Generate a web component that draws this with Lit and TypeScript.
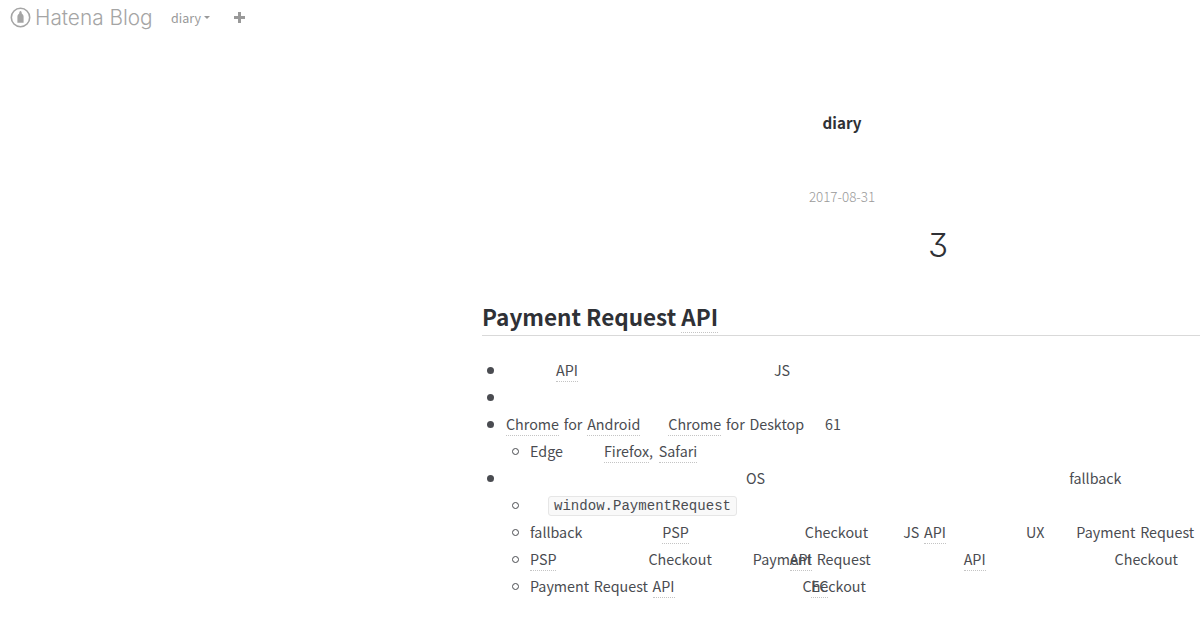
import { LitElement, html, css } from "lit";
import { customElement } from "lit/decorators.js";

type Seg = [number, string, boolean?];

const rows: { lvl: number; segs: Seg[]; code?: boolean }[] = [
  { lvl: 1, segs: [[50, "API", true], [196, "JS"]] },
  { lvl: 1, segs: [] },
  { lvl: 1, segs: [[0, "Chrome", true], [0, " for "], [0, "Android", true], [28, "Chrome", true], [0, " for Desktop"], [21, "61"]] },
  { lvl: 2, segs: [[0, "Edge"], [41, "Firefox", true], [0, ", "], [1, "Safari", true]] },
  { lvl: 1, segs: [[240, "OS"], [304, "fallback"]] },
  { lvl: 2, code: true, segs: [] },
  { lvl: 2, segs: [[0, "fallback"], [80, "PSP", true], [116, "Checkout"], [35, "JS "], [0, "API", true], [80, "UX"], [32, "Payment Request"]] },
  { lvl: 2, segs: [[0, "PSP", true], [92, "Checkout"], [41, "Payment Request"], [-81, "API", true], [152, "API", true], [129, "Checkout"]] },
  { lvl: 2, segs: [[0, "Payment Request "], [0, "API", true], [128, "Checkout"], [-55, "EC", true]] },
];

@customElement("app-root")
export class AppRoot extends LitElement {
  static styles = css`
    :host { display: block; width: 1200px; height: 630px; overflow: hidden; background: #fff; color: #4a4c51; font-family: "Noto Sans CJK JP", "Noto Sans", sans-serif; font-size: 14.3px; word-spacing: 1.5px; position: relative; }
    .nav { display: flex; align-items: center; height: 35px; padding-left: 10px; color: #999; word-spacing: 0; }
    .logo { display: flex; align-items: center; gap: 4px; font-family: "Inter", sans-serif; font-weight: 300; font-size: 20.8px; color: #a5a5a5; width: 161px; white-space: nowrap; }
    .logo svg { width: 21px; height: 21px; flex: none; }
    .blog { font-size: 12.5px; color: #999; display: flex; align-items: center; gap: 3px; width: 63px; }
    .caret { width: 0; height: 0; border: 3px solid transparent; border-top-color: #999; border-bottom: 0; }
    .plus { width: 11px; height: 11px; }
    .main { margin-left: 482px; width: 720px; }
    .title { text-align: center; font-weight: 700; font-size: 15.2px; line-height: 22px; margin-top: 76px; color: #2f3136; }
    .date { text-align: center; font-size: 13.4px; line-height: 20px; margin-top: 53px; color: #999; font-weight: 300; }
    .big { text-align: center; margin-left: 192px; font-family: "Inter", sans-serif; font-feature-settings: "cv09"; font-weight: 300; font-size: 33px; line-height: 40px; margin-top: 19px; color: #2f3136; }
    h2 { margin: 35px 0 0; font-size: 22.5px; word-spacing: 0; line-height: 32px; font-weight: 700; color: #2f3136; border-bottom: 1px solid #d9d9d9; height: 35px; white-space: nowrap; }
    .k { border-bottom: 1px dotted #c4c4c4; padding-bottom: 1px; margin-bottom: -2px; }
    h2 .k { padding-bottom: 0; margin-bottom: 0; }
    .list { margin-top: 20px; }
    .row { display: flex; align-items: center; height: 27px; white-space: pre; position: relative; }
    .l1 { padding-left: 24px; }
    .l2 { padding-left: 48px; }
    .dot { position: absolute; left: 5px; top: 11px; width: 7px; height: 7px; border-radius: 50%; background: #4a4c51; }
    .ring { position: absolute; left: 30px; top: 11px; width: 7px; height: 7px; border-radius: 50%; border: 1px solid #4a4c51; box-sizing: border-box; }
    code { margin: 2px 0 0 18px; font-family: "Liberation Mono", monospace; font-size: 14.05px; line-height: 18px; padding: 0 5px; background: #f9f9f9; border: 1px solid #e6e6e6; border-radius: 3px; }
  `;

  render() {
    return html`
      <div class="nav">
        <div class="logo">
          <svg viewBox="0 0 21 21"><circle cx="10.5" cy="10.5" r="9.2" fill="none" stroke="#a5a5a5" stroke-width="1.6"/><path d="M10.5 4c1 0 1.3 1.6 1.3 2.6 1.2.8 1.8 1.8 1.8 3.2v6H7.4v-6c0-1.4.6-2.4 1.8-3.2C9.2 5.6 9.5 4 10.5 4z" fill="#a5a5a5"/></svg>
          Hatena Blog
        </div>
        <div class="blog">diary<span class="caret"></span></div>
        <svg class="plus" viewBox="0 0 11 11"><path d="M4 0h3v4h4v3H7v4H4V7H0V4h4z" fill="#999"/></svg>
      </div>
      <div class="main">
        <div class="title">diary</div>
        <div class="date">2017-08-31</div>
        <div class="big">3</div>
        <h2>Payment Request <span class="k">API</span></h2>
        <div class="list">
          ${rows.map((r) => html`
            <div class="row ${r.lvl === 1 ? "l1" : "l2"}">
              <span class=${r.lvl === 1 ? "dot" : "ring"}></span>
              ${r.code ? html`<code>window.PaymentRequest</code>` : ""}
              ${r.segs.map((s) => html`<span class=${s[2] ? "k" : ""} style="margin-left:${s[0]}px">${s[1]}</span>`)}
            </div>`)}
        </div>
      </div>
    `;
  }
}
